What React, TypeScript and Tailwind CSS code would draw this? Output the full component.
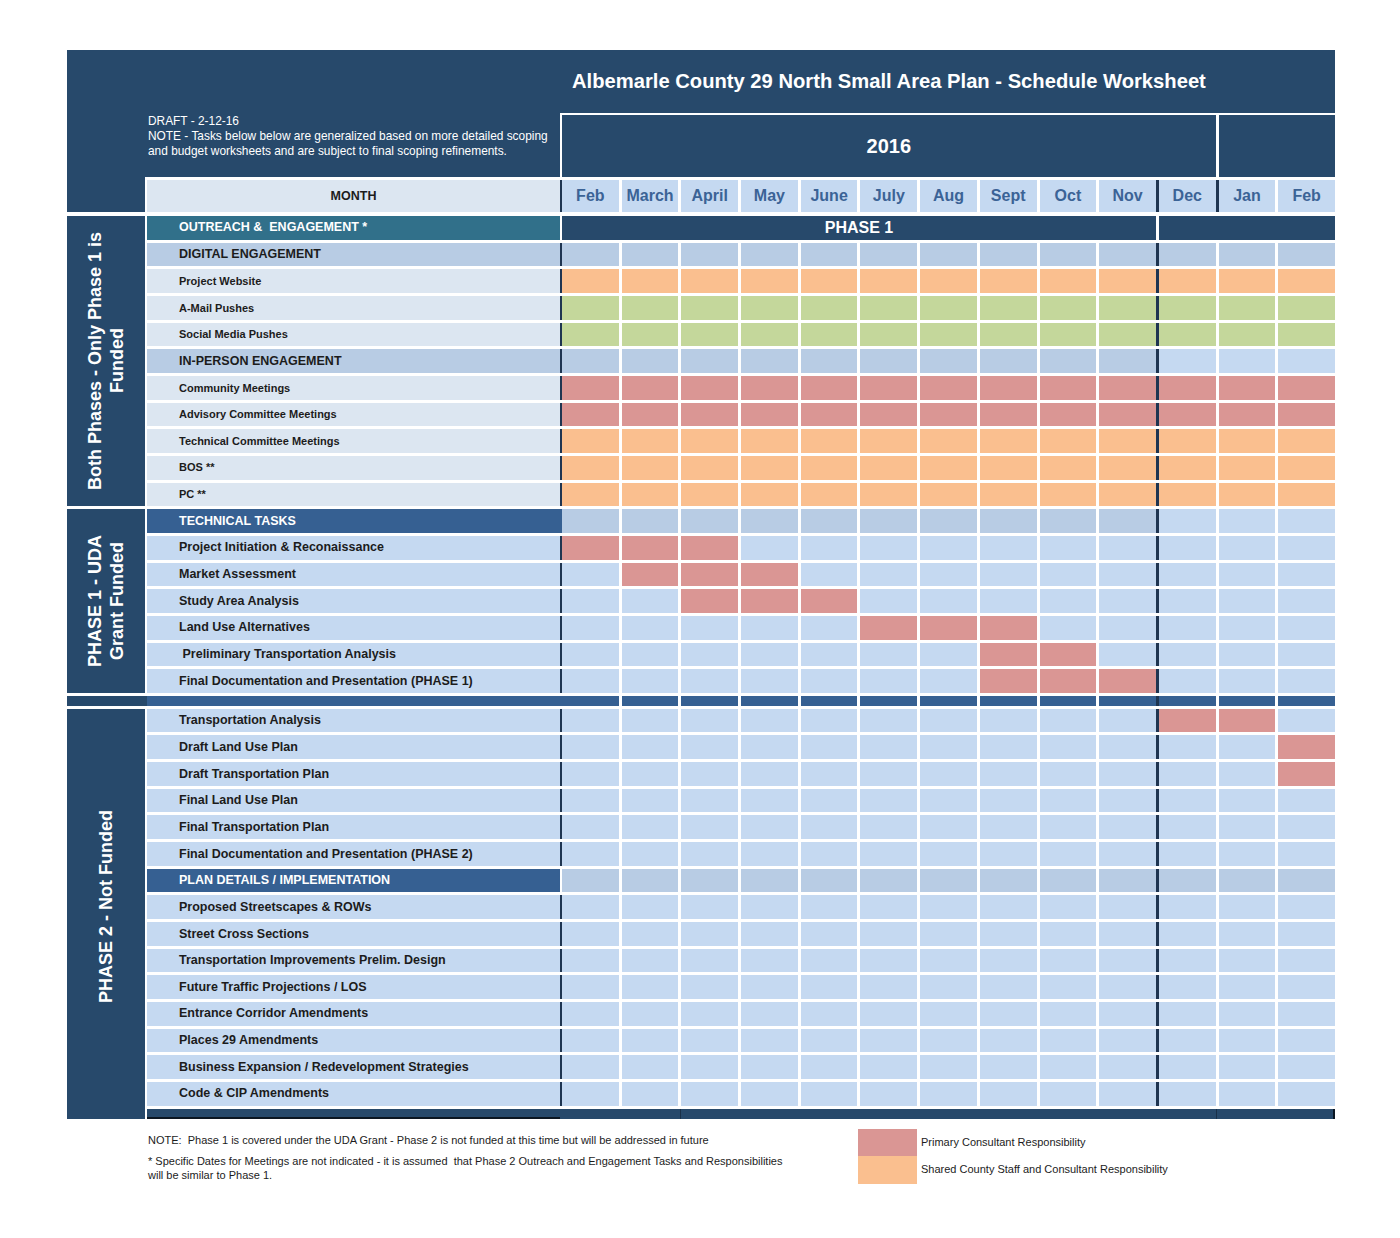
import React from 'react';

const BG: Record<string, string> = {
  h: 'bg-[#b8cce4]',
  l: 'bg-[#c5d9f1]',
  r: 'bg-[#da9694]',
  o: 'bg-[#fabf8f]',
  g: 'bg-[#c4d79b]',
  m: 'bg-[#366092]',
};

const fill = (c: string): string[] => Array.from({ length: 13 }, () => c);
const hdr10 = (): string[] => Array.from({ length: 13 }, (_, i) => (i < 10 ? 'h' : 'l'));
const bar = (idx: number[]): string[] => Array.from({ length: 13 }, (_, i) => (idx.includes(i) ? 'r' : 'l'));

const MONTHS = ['Feb', 'March', 'April', 'May', 'June', 'July', 'Aug', 'Sept', 'Oct', 'Nov', 'Dec', 'Jan', 'Feb'];

function Cells({ cells }: { cells: string[] }) {
  return (
    <div className="flex-1 grid grid-cols-[repeat(13,minmax(0,1fr))] gap-x-[3px] bg-white">
      {cells.map((c, i) => (
        <div key={i} className={`${BG[c]} ${i === 10 ? 'shadow-[-3px_0_0_#1f3551]' : ''}`} />
      ))}
    </div>
  );
}

type Kind = 'sub' | 'small' | 'head' | 'headw' | 'task';

function Row({ label, kind, cells }: { label: React.ReactNode; kind: Kind; cells: string[] }) {
  let labelCls = '';
  let lineCls = 'bg-[#1f3551]';
  if (kind === 'sub') labelCls = 'bg-[#b8cce4] text-[12.5px] text-[#1c1c1c]';
  if (kind === 'small') labelCls = 'bg-[#dce6f1] text-[11px] text-[#1c1c1c]';
  if (kind === 'task') labelCls = 'bg-[#c5d9f1] text-[12.5px] text-[#1c1c1c]';
  if (kind === 'head') {
    labelCls = 'bg-[#366092] text-[12.5px] text-white';
    lineCls = 'bg-[#366092]';
  }
  if (kind === 'headw') {
    labelCls = 'bg-[#366092] text-[12.5px] text-white';
    lineCls = 'bg-white';
  }
  return (
    <div className="flex h-[23.67px]">
      <div className={`w-[413px] shrink-0 flex items-center pl-[32px] font-bold whitespace-pre ${labelCls}`}>{label}</div>
      <div className={`w-[2px] shrink-0 ${lineCls}`} />
      <Cells cells={cells} />
    </div>
  );
}

function Section({ label, children, extra }: { label: React.ReactNode; children: React.ReactNode; extra?: string }) {
  return (
    <div className="flex">
      <div className={`w-[78px] shrink-0 bg-[#27496b] flex items-center justify-center ${extra ?? ''}`}>
        <div className="[writing-mode:vertical-rl] rotate-180 text-white font-bold text-[18px] leading-[22px] text-center whitespace-nowrap">
          {label}
        </div>
      </div>
      <div className="ml-[2px] flex-1 flex flex-col gap-[3px]">{children}</div>
    </div>
  );
}

export default function App() {
  return (
    <div className="min-h-[1238px] bg-white pt-[50px] font-['Liberation_Sans',Arial,sans-serif]">
      <div className="ml-[67px] w-[1268px]">
        {/* Header */}
        <div className="bg-[#27496b]">
          <div className="h-[63px] flex items-center pl-[505px] text-white font-bold text-[20.2px]">
            Albemarle County 29 North Small Area Plan - Schedule Worksheet
          </div>
          <div className="flex h-[64px]">
            <div className="w-[493px] shrink-0 pl-[81px] pt-[1px] text-white text-[11.9px] leading-[15px]">
              DRAFT - 2-12-16
              <br />
              NOTE - Tasks below below are generalized based on more detailed scoping
              <br />
              and budget worksheets and are subject to final scoping refinements.
            </div>
            <div className="flex-1 flex border-t-2 border-l-2 border-white">
              <div className="w-[653.6px] shrink-0 flex items-center justify-center text-white font-bold text-[20px]">
                2016
              </div>
              <div className="w-[3px] shrink-0 bg-white" />
              <div className="flex-1" />
            </div>
          </div>
        </div>

        {/* Month row */}
        <div className="flex h-[35px]">
          <div className="w-[78px] shrink-0 bg-[#27496b]" />
          <div className="flex-1 flex pt-[3px] pl-[2px] bg-white">
            <div className="w-[413px] shrink-0 bg-[#dce6f1] flex items-center justify-center font-bold text-[12.5px] text-[#1c1c1c]">
              MONTH
            </div>
            <div className="w-[2px] shrink-0 bg-[#1f3551]" />
            <div className="flex-1 grid grid-cols-[repeat(13,minmax(0,1fr))] gap-x-[3px]">
              {MONTHS.map((m, i) => (
                <div
                  key={i}
                  className={`bg-[#c5d9f1] flex items-center justify-center font-bold text-[16px] text-[#3b6396] ${
                    i === 10 || i === 11 ? 'shadow-[-3px_0_0_#1f3551]' : ''
                  }`}
                >
                  {m}
                </div>
              ))}
            </div>
          </div>
        </div>

        {/* Body */}
        <div className="mt-[4px] flex flex-col gap-[3px]">
          <Section
            label={
              <>
                Both Phases - Only Phase 1 is
                <br />
                Funded
              </>
            }
          >
            <div className="flex h-[23.67px]">
              <div className="w-[413px] shrink-0 flex items-center pl-[32px] font-bold whitespace-pre bg-[#31708a] text-white text-[12.5px]">
                {'OUTREACH &  ENGAGEMENT *'}
              </div>
              <div className="w-[2px] shrink-0 bg-white" />
              <div className="flex-1 grid grid-cols-[repeat(13,minmax(0,1fr))] gap-x-[3px] bg-white">
                <div className="col-span-10 bg-[#27496b] flex items-center justify-center text-white font-bold text-[16px]">
                  PHASE 1
                </div>
                <div className="col-span-3 bg-[#27496b]" />
              </div>
            </div>
            <Row label="DIGITAL ENGAGEMENT" kind="sub" cells={fill('h')} />
            <Row label="Project Website" kind="small" cells={fill('o')} />
            <Row label="A-Mail Pushes" kind="small" cells={fill('g')} />
            <Row label="Social Media Pushes" kind="small" cells={fill('g')} />
            <Row label="IN-PERSON ENGAGEMENT" kind="sub" cells={hdr10()} />
            <Row label="Community Meetings" kind="small" cells={fill('r')} />
            <Row label="Advisory Committee Meetings" kind="small" cells={fill('r')} />
            <Row label="Technical Committee Meetings" kind="small" cells={fill('o')} />
            <Row label="BOS **" kind="small" cells={fill('o')} />
            <Row label="PC **" kind="small" cells={fill('o')} />
          </Section>

          <Section
            label={
              <>
                PHASE 1 - UDA
                <br />
                Grant Funded
              </>
            }
          >
            <Row label="TECHNICAL TASKS" kind="head" cells={hdr10()} />
            <Row label="Project Initiation & Reconaissance" kind="task" cells={bar([0, 1, 2])} />
            <Row label="Market Assessment" kind="task" cells={bar([1, 2, 3])} />
            <Row label="Study Area Analysis" kind="task" cells={bar([2, 3, 4])} />
            <Row label="Land Use Alternatives" kind="task" cells={bar([5, 6, 7])} />
            <Row label={'\u00a0Preliminary Transportation Analysis'} kind="task" cells={bar([7, 8])} />
            <Row label="Final Documentation and Presentation (PHASE 1)" kind="task" cells={bar([7, 8, 9])} />
          </Section>

          {/* separator band */}
          <div className="flex h-[10px]">
            <div className="w-[78px] shrink-0 bg-[#27496b]" />
            <div className="w-[2px] shrink-0 bg-[#27496b]" />
            <div className="w-[413px] shrink-0 bg-[#366092]" />
            <div className="w-[2px] shrink-0 bg-[#366092]" />
            <Cells cells={fill('m')} />
          </div>

          <Section label="PHASE 2 - Not Funded" extra="pb-[15px]">
            <Row label="Transportation Analysis" kind="task" cells={bar([10, 11])} />
            <Row label="Draft Land Use Plan" kind="task" cells={bar([12])} />
            <Row label="Draft Transportation Plan" kind="task" cells={bar([12])} />
            <Row label="Final Land Use Plan" kind="task" cells={bar([])} />
            <Row label="Final Transportation Plan" kind="task" cells={bar([])} />
            <Row label="Final Documentation and Presentation (PHASE 2)" kind="task" cells={bar([])} />
            <Row label="PLAN DETAILS / IMPLEMENTATION" kind="headw" cells={fill('h')} />
            <Row label="Proposed Streetscapes & ROWs" kind="task" cells={bar([])} />
            <Row label="Street Cross Sections" kind="task" cells={bar([])} />
            <Row label="Transportation Improvements Prelim. Design" kind="task" cells={bar([])} />
            <Row label="Future Traffic Projections / LOS" kind="task" cells={bar([])} />
            <Row label="Entrance Corridor Amendments" kind="task" cells={bar([])} />
            <Row label="Places 29 Amendments" kind="task" cells={bar([])} />
            <Row label="Business Expansion / Redevelopment Strategies" kind="task" cells={bar([])} />
            <Row label="Code & CIP Amendments" kind="task" cells={bar([])} />
            <div className="flex h-[10px]">
              <div className="w-[413px] shrink-0 bg-[#27496b] border-b-2 border-[#0b1622]" />
              <div className="w-[2px] shrink-0 bg-[#27496b]" />
              <div className="flex-1 flex bg-[#27496b] border-r-2 border-[#0b1622]">
                <div className="w-[119px] border-r border-[#1a3048]" />
                <div className="w-[536px] border-r border-[#1a3048]" />
                <div className="flex-1" />
              </div>
            </div>
          </Section>
        </div>

        {/* Footer */}
        <div className="flex mt-[10px]">
          <div className="ml-[81px] w-[710px] shrink-0 pt-[4px] text-[11px] leading-[14px] text-[#1c1c1c]">
            <p className="whitespace-pre">
              {'NOTE:  Phase 1 is covered under the UDA Grant - Phase 2 is not funded at this time but will be addressed in future'}
            </p>
            <p className="mt-[7px] whitespace-pre">
              {'* Specific Dates for Meetings are not indicated - it is assumed  that Phase 2 Outreach and Engagement Tasks and Responsibilities'}
              <br />
              will be similar to Phase 1.
            </p>
          </div>
          <div className="flex flex-col">
            <div className="flex items-center h-[27px]">
              <div className="w-[59px] h-full bg-[#da9694]" />
              <span className="ml-[4px] text-[11px] text-[#1c1c1c]">Primary Consultant Responsibility</span>
            </div>
            <div className="flex items-center h-[28px]">
              <div className="w-[59px] h-full bg-[#fabf8f]" />
              <span className="ml-[4px] text-[11px] text-[#1c1c1c]">Shared County Staff and Consultant Responsibility</span>
            </div>
          </div>
        </div>
      </div>
    </div>
  );
}
